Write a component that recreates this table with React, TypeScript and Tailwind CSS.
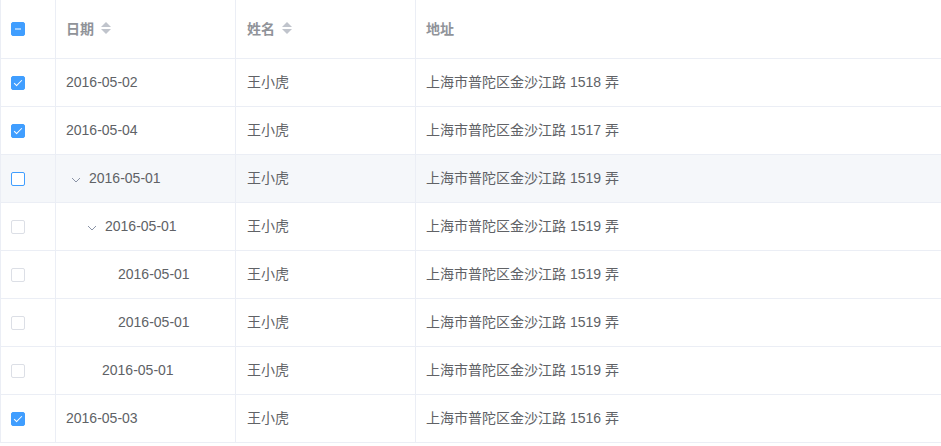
type Row = {
  date: string;
  no: string;
  level: number;
  expandable?: boolean;
  leafIndent?: boolean;
  checked?: boolean;
  hover?: boolean;
};

const rows: Row[] = [
  { date: '2016-05-02', no: '1518', level: 0, checked: true },
  { date: '2016-05-04', no: '1517', level: 0, checked: true },
  { date: '2016-05-01', no: '1519', level: 0, expandable: true, hover: true },
  { date: '2016-05-01', no: '1519', level: 1, expandable: true },
  { date: '2016-05-01', no: '1519', level: 2, leafIndent: true },
  { date: '2016-05-01', no: '1519', level: 2, leafIndent: true },
  { date: '2016-05-01', no: '1519', level: 1, leafIndent: true },
  { date: '2016-05-03', no: '1516', level: 0, checked: true },
];

const Checkbox = ({
  state,
  hover,
}: {
  state: 'checked' | 'indeterminate' | 'none';
  hover?: boolean;
}) => {
  if (state === 'checked') {
    return (
      <span className="relative inline-block h-[14px] w-[14px] rounded-[2px] border border-[#409eff] bg-[#409eff]">
        <span className="absolute left-[4px] top-[1px] box-content h-[7px] w-[3px] rotate-45 border-b border-r border-white" />
      </span>
    );
  }
  if (state === 'indeterminate') {
    return (
      <span className="relative inline-block h-[14px] w-[14px] rounded-[2px] border border-[#409eff] bg-[#409eff]">
        <span className="absolute left-0 right-0 top-[5px] h-[2px] scale-50 bg-white" />
      </span>
    );
  }
  return (
    <span
      className={
        hover
          ? 'inline-block h-[14px] w-[14px] rounded-[2px] border border-[#409eff] bg-white'
          : 'inline-block h-[14px] w-[14px] rounded-[2px] border border-[#dcdfe6] bg-white'
      }
    />
  );
};

const SortCaret = () => (
  <span className="relative inline-block h-[34px] w-[24px] align-middle">
    <span className="absolute left-[7px] top-[5px] h-0 w-0 border-[5px] border-transparent border-b-[#c0c4cc]" />
    <span className="absolute bottom-[7px] left-[7px] h-0 w-0 border-[5px] border-transparent border-t-[#c0c4cc]" />
  </span>
);

const Chevron = () => (
  <span className="mr-[3px] inline-flex h-[20px] w-[20px] items-center justify-center">
    <svg width="10" height="10" viewBox="0 0 10 10" className="mt-[2px]">
      <path d="M1 3 L5 7 L9 3" fill="none" stroke="#8a93a6" strokeWidth="1" />
    </svg>
  </span>
);

const cellLine = 'flex items-center border-r border-[#ebeef5]';

export default function App() {
  return (
    <div
      className="w-[941px] h-[446px] overflow-hidden bg-white text-[14px] text-[#606266]"
      style={{ fontFamily: '"Liberation Sans", "Noto Sans CJK SC", sans-serif' }}
    >
      <div className="w-[1100px] border-l border-[#ebeef5]">
        {/* header */}
        <div className="flex h-[59px] border-b border-[#ebeef5] font-bold text-[#909399]">
          <div className={`${cellLine} w-[55px] pl-[10px]`}>
            <Checkbox state="indeterminate" />
          </div>
          <div className={`${cellLine} w-[180px] pl-[10px]`}>
            <span>日期</span>
            <SortCaret />
          </div>
          <div className={`${cellLine} w-[180px] pl-[11px]`}>
            <span>姓名</span>
            <SortCaret />
          </div>
          <div className={`${cellLine} flex-1 pl-[10px]`}>
            <span>地址</span>
          </div>
        </div>

        {rows.map((r, i) => (
          <div
            key={i}
            className={
              r.hover
                ? 'flex h-[48px] border-b border-[#ebeef5] bg-[#f5f7fa]'
                : 'flex h-[48px] border-b border-[#ebeef5] bg-white'
            }
          >
            <div className={`${cellLine} w-[55px] pl-[10px]`}>
              <Checkbox state={r.checked ? 'checked' : 'none'} hover={r.hover} />
            </div>
            <div className={`${cellLine} w-[180px] pl-[10px]`}>
              <span style={{ width: r.level * 16 }} className="inline-block shrink-0" />
              {r.expandable && <Chevron />}
              {r.leafIndent && <span className="inline-block w-[20px] shrink-0" />}
              <span>{r.date}</span>
            </div>
            <div className={`${cellLine} w-[180px] pl-[11px]`}>王小虎</div>
            <div className={`${cellLine} flex-1 pl-[10px]`}>
              上海市普陀区金沙江路 {r.no} 弄
            </div>
          </div>
        ))}
      </div>
    </div>
  );
}
